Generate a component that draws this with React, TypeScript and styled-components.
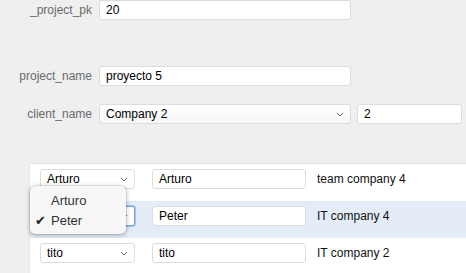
import React from 'react';
import styled, { createGlobalStyle } from 'styled-components';

const GlobalStyle = createGlobalStyle`
	html, body {
		margin: 0;
		padding: 0;
		background: #efefef;
		font-family: 'Liberation Sans', Arial, sans-serif;
		font-size: 12px;
		overflow: hidden;
	}
`;

const Page = styled.div`
	width: 466px;
	height: 273px;
	position: relative;
	overflow: hidden;
`;

const FormRow = styled.div<{ $top: number }>`
	display: flex;
	align-items: center;
	gap: 6px;
	height: 20px;
	margin-top: ${(p) => p.$top}px;
`;

const Label = styled.div`
	width: 92px;
	text-align: right;
	color: #6b6b6b;
	margin-right: 1px;
`;

const TextInput = styled.div<{ $width: number }>`
	box-sizing: border-box;
	width: ${(p) => p.$width}px;
	height: 20px;
	background: #fff;
	border: 1px solid #dcdcdc;
	border-radius: 3px;
	padding: 0 6px;
	display: flex;
	align-items: center;
	color: #000;
`;

const SelectBox = styled.div<{ $width: number; $focused?: boolean; $gradient?: boolean }>`
	box-sizing: border-box;
	width: ${(p) => p.$width}px;
	height: 20px;
	background: ${(p) => (p.$gradient ? 'linear-gradient(#ffffff, #f6f6f6)' : '#fff')};
	border: 1px solid ${(p) => (p.$focused ? '#7aa7e3' : '#dcdcdc')};
	box-shadow: ${(p) => (p.$focused ? '0 0 0 1px #9fc0ec' : 'none')};
	border-radius: 3px;
	padding: 0 6px;
	display: flex;
	align-items: center;
	justify-content: space-between;
	color: #000;
`;

const Chevron = () => (
	<svg width="8" height="5" viewBox="0 0 8 5">
		<path d="M1 1 L4 4 L7 1" fill="none" stroke="#666" strokeWidth="1" />
	</svg>
);

const Table = styled.div`
	margin-top: 39px;
	margin-left: 29px;
	width: 460px;
	background: #fff;
	border-top: 1px solid #dedede;
	border-left: 1px solid #e6e6e6;
	border-top-left-radius: 2px;
`;

const Row = styled.div<{ $selected?: boolean }>`
	box-sizing: border-box;
	height: 37px;
	padding: 5px 0 0 10px;
	display: flex;
	align-items: flex-start;
	background: ${(p) => (p.$selected ? '#e4ecf7' : '#fff')};
`;

const CellGap = styled.div`
	width: 17px;
`;

const TeamText = styled.div`
	margin-left: 11px;
	height: 20px;
	line-height: 20px;
	color: #111;
`;

const Menu = styled.div`
	position: absolute;
	left: 30px;
	top: 186px;
	width: 96px;
	height: 48px;
	box-sizing: border-box;
	background: #f7f7f7;
	border-radius: 5px;
	box-shadow: 0 1px 5px rgba(0, 0, 0, 0.3), 0 0 0 0.5px rgba(0, 0, 0, 0.15);
	padding-top: 5px;
`;

const MenuItem = styled.div`
	position: relative;
	height: 20px;
	line-height: 20px;
	padding-left: 21px;
	font-size: 13px;
	color: #333;
`;

const Check = styled.span`
	position: absolute;
	left: 5px;
	top: 0;
	font-size: 13px;
	color: #222;
	font-family: 'DejaVu Sans', sans-serif;
`;

const rows = [
	{ name: 'Arturo', team: 'team company 4' },
	{ name: 'Peter', team: 'IT company 4', selected: true },
	{ name: 'tito', team: 'IT company 2' },
];

const App = () => {
	return (
		<Page>
			<GlobalStyle />
			<FormRow $top={0}>
				<Label>_project_pk</Label>
				<TextInput $width={252}>20</TextInput>
			</FormRow>
			<FormRow $top={46}>
				<Label>project_name</Label>
				<TextInput $width={252}>proyecto 5</TextInput>
			</FormRow>
			<FormRow $top={18}>
				<Label>client_name</Label>
				<SelectBox $width={252} $gradient>
					<span>Company 2</span>
					<Chevron />
				</SelectBox>
				<TextInput $width={105}>2</TextInput>
			</FormRow>
			<Table>
				{rows.map((r) => (
					<Row key={r.name} $selected={r.selected}>
						<SelectBox $width={95} $focused={r.selected}>
							<span>{r.selected ? '' : r.name}</span>
							<Chevron />
						</SelectBox>
						<CellGap />
						<TextInput $width={154}>{r.name}</TextInput>
						<TeamText>{r.team}</TeamText>
					</Row>
				))}
			</Table>
			<Menu>
				<MenuItem>Arturo</MenuItem>
				<MenuItem>
					<Check>✔</Check>
					Peter
				</MenuItem>
			</Menu>
		</Page>
	);
};

export default App;
